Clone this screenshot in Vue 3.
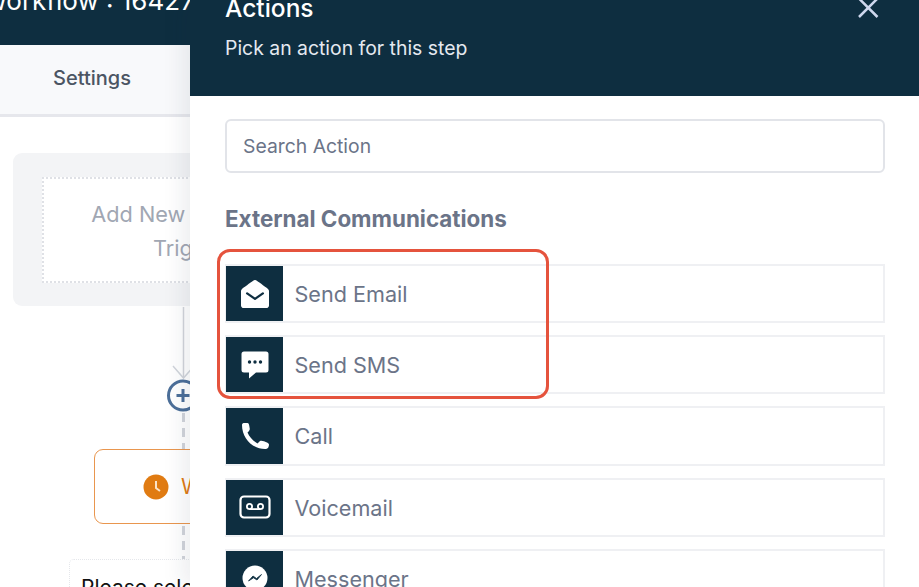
<script setup>
const actions = [
  { name: 'Send Email', icon: 'mail' },
  { name: 'Send SMS', icon: 'sms' },
  { name: 'Call', icon: 'call' },
  { name: 'Voicemail', icon: 'voicemail' },
  { name: 'Messenger', icon: 'messenger' },
]
</script>

<template>
  <div class="page">
    <header class="topbar"><span class="title">Workflow : 16427</span></header>
    <nav class="tabs"><span class="tab">Settings</span></nav>

    <main class="canvas">
      <div class="trigger-card">
        <div class="trigger-inner">
          <span>Add New Workflow</span>
          <span>Trigger</span>
        </div>
      </div>
      <svg class="lines" width="190" height="470" viewBox="0 0 190 470">
        <path d="M183.500 190V260" stroke="#d1d5db" stroke-width="1.500" fill="none" />
        <path d="M173 249L183.500 261L194 249" stroke="#d1d5db" stroke-width="1.500" fill="none" />
        <path d="M183.500 296V334M183.500 409V445" stroke="#d1d5db" stroke-width="3" stroke-dasharray="9 6" fill="none" />
        <circle cx="183" cy="278.500" r="14.500" fill="#fff" stroke="#4c6f99" stroke-width="3" />
        <path d="M176.500 278.500H189.500M183 272V285" stroke="#4c6f99" stroke-width="3" />
      </svg>
      <div class="wait-node">
        <svg class="clock" width="26" height="26" viewBox="0 0 26 26">
          <circle cx="13" cy="13" r="12.500" fill="#e07b12" />
          <path d="M13 7V14L17 17" stroke="#fbe3c8" stroke-width="2" fill="none" />
        </svg>
        <span>Wait</span>
      </div>
      <div class="select-node">Please select</div>
    </main>

    <aside class="drawer">
      <div class="drawer-head">
        <h2>Actions</h2>
        <p>Pick an action for this step</p>
        <svg class="close" width="22" height="22" viewBox="0 0 22 22">
          <path d="M2 1.500L20.500 20M20.500 1.500L2 20" stroke="#cfd8ee" stroke-width="2.500" fill="none" />
        </svg>
      </div>
      <div class="drawer-body">
        <div class="search">Search Action</div>
        <h3>External Communications</h3>
        <div class="list">
          <div class="highlight"></div>
          <div v-for="a in actions" :key="a.name" class="row">
            <div class="row-icon">
              <svg v-if="a.icon === 'mail'" width="28" height="28" viewBox="0 0 512 512">
                <path fill="#fff" d="M512 464c0 26.51-21.49 48-48 48H48c-26.51 0-48-21.49-48-48V200.724a48 48 0 0 1 18.387-37.776c24.913-19.529 45.501-35.365 164.2-121.511C199.412 29.17 232.797-.347 256 .003c23.198-.354 56.596 29.172 73.413 41.433 118.687 86.137 139.303 101.995 164.2 121.512A48 48 0 0 1 512 200.724V464z" />
                <path fill="none" stroke="#0e2e40" stroke-width="42" stroke-linecap="round" stroke-linejoin="round" d="M112 245L256 345L400 245" />
              </svg>
              <svg v-else-if="a.icon === 'sms'" width="28" height="28" viewBox="0 0 28 28">
                <path fill="#fff" d="M3 0.500H25A2.500 2.500 0 0 1 27.500 3V19A2.500 2.500 0 0 1 25 21.500H15L8 27.500V21.500H3A2.500 2.500 0 0 1 0.500 19V3A2.500 2.500 0 0 1 3 0.500Z" />
                <circle cx="8.500" cy="11" r="1.700" fill="#0e2e40" />
                <circle cx="14" cy="11" r="1.700" fill="#0e2e40" />
                <circle cx="19.500" cy="11" r="1.700" fill="#0e2e40" />
              </svg>
              <svg v-else-if="a.icon === 'call'" width="28" height="28" viewBox="0 0 28 28">
                <path fill="#fff" d="M1 3C1 1.500 2 1 3.500 1L6.500 1C7.500 1 8 2 8.300 4L8.800 7C8.800 8 7.800 9.500 6.500 10.500C8.500 15 12 19 16.500 21.500L19 19C20 18.500 21 18.500 23 19.300L26.500 20.800C27.500 21.300 28 22 28 23L27.500 25C27 26.500 25.500 27 24 27C11 27 1 16 1 3Z" />
              </svg>
              <svg v-else-if="a.icon === 'voicemail'" width="32" height="24" viewBox="0 0 32 24">
                <rect x="1.500" y="1.500" width="29" height="21" rx="3.500" fill="none" stroke="#fff" stroke-width="2.200" />
                <circle cx="10.500" cy="11.500" r="2.600" fill="none" stroke="#fff" stroke-width="1.800" />
                <circle cx="21.500" cy="11.500" r="2.600" fill="none" stroke="#fff" stroke-width="1.800" />
                <path d="M10.500 14.100H21.500" stroke="#fff" stroke-width="1.800" />
              </svg>
              <svg v-else width="26" height="26" viewBox="0 0 26 26">
                <circle cx="13" cy="13" r="12.500" fill="#fff" />
                <path d="M6.500 16L11 11L14.500 13.500L19.500 9.500L15 15L11.500 12.800Z" fill="#0e2e40" stroke="#0e2e40" stroke-width="0.800" />
              </svg>
            </div>
            <span class="row-label">{{ a.name }}</span>
          </div>
        </div>
      </div>
    </aside>
  </div>
</template>

<style>
html, body { margin: 0; background: #fff; }
</style>

<style scoped>
.page {
  position: relative;
  width: 919px;
  height: 587px;
  overflow: hidden;
  background: #fff;
  font-family: Inter, "Liberation Sans", sans-serif;
}
.topbar {
  height: 45px;
  background: #0e2e40;
  overflow: hidden;
}
.title {
  display: block;
  margin: -16px 0 0 -18px;
  font-size: 26px;
  line-height: 34px;
  color: #fff;
  white-space: nowrap;
}
.tabs {
  display: flex;
  height: 72px;
  padding: 0 0 3px 53px;
  box-sizing: border-box;
  align-items: center;
  background: #f8f9fb;
  border-bottom: 3px solid #e6e7ec;
}
.tab {
  font-size: 20px;
  font-weight: 500;
  color: #4b5563;
}
.canvas {
  position: relative;
  height: 470px;
}
.trigger-card {
  position: absolute;
  left: 13px;
  top: 36px;
  width: 340px;
  height: 153px;
  box-sizing: border-box;
  padding: 24px 29px;
  background: #f3f4f6;
  border-radius: 9px;
}
.trigger-inner {
  display: flex;
  flex-direction: column;
  align-items: center;
  justify-content: center;
  gap: 8px;
  height: 106px;
  box-sizing: border-box;
  padding: 2px 0 0 14px;
  background: #fff;
  border: 2px dotted #dfe1e6;
  color: #a1a7b3;
  font-size: 21.700px;
  line-height: 26px;
  white-space: nowrap;
}
.lines {
  position: absolute;
  left: 0;
  top: 0;
}
.wait-node {
  position: absolute;
  left: 94px;
  top: 332px;
  width: 178px;
  height: 75px;
  box-sizing: border-box;
  padding-left: 48px;
  display: flex;
  align-items: center;
  gap: 12px;
  background: #fff;
  border: 1.500px solid #e9964e;
  border-radius: 9px;
  color: #e07b12;
  font-size: 21px;
}
.select-node {
  position: absolute;
  left: 69px;
  top: 442px;
  width: 260px;
  height: 80px;
  box-sizing: border-box;
  padding: 15px 11px;
  background: #fff;
  border: 1px dotted #e5e7eb;
  border-radius: 5px;
  color: #111;
  font-size: 21px;
  line-height: 26px;
}
.drawer {
  position: absolute;
  left: 190px;
  top: 0;
  width: 729px;
  height: 587px;
  background: #fff;
  box-shadow: -8px 0 20px rgba(30, 41, 59, 0.08);
}
.drawer-head {
  position: relative;
  height: 96px;
  box-sizing: border-box;
  padding-left: 35px;
  background: #0e2e40;
  overflow: hidden;
}
h2 {
  margin: -7px 0 0;
  font-size: 24.500px;
  font-weight: 500;
  line-height: 30px;
  color: #fff;
}
p {
  margin: 13px 0 0;
  font-size: 19.400px;
  line-height: 24px;
  color: #e5e9f0;
}
.close {
  position: absolute;
  left: 667px;
  top: -3px;
}
.drawer-body {
  padding: 23px 34px 0 35px;
}
.search {
  height: 54px;
  box-sizing: border-box;
  padding-left: 16px;
  display: flex;
  align-items: center;
  border: 2px solid #e2e4e9;
  border-radius: 6px;
  color: #6b7488;
  font-size: 19.350px;
}
h3 {
  margin: 32px 0 0;
  font-size: 22.400px;
  font-weight: 700;
  line-height: 28px;
  color: #6b7488;
}
.list {
  position: relative;
  margin-top: 31px;
  display: flex;
  flex-direction: column;
  gap: 12px;
}
.row {
  display: flex;
  align-items: center;
  height: 59.200px;
  box-sizing: border-box;
  background: #fff;
  border: 1px solid #eff0f3;
  border-width: 2px 2px 2px 1px;
}
.row-icon {
  width: 57px;
  height: 100%;
  flex: none;
  display: flex;
  align-items: center;
  justify-content: center;
  background: #0e2e40;
}
.row-label {
  margin: 1px 0 0 11.500px;
  font-size: 21.600px;
  color: #6b7488;
}
.highlight {
  position: absolute;
  left: -8px;
  top: -15px;
  width: 332px;
  height: 150px;
  box-sizing: border-box;
  border: 3px solid #e5533d;
  border-radius: 13px;
  z-index: 2;
  pointer-events: none;
}
</style>
